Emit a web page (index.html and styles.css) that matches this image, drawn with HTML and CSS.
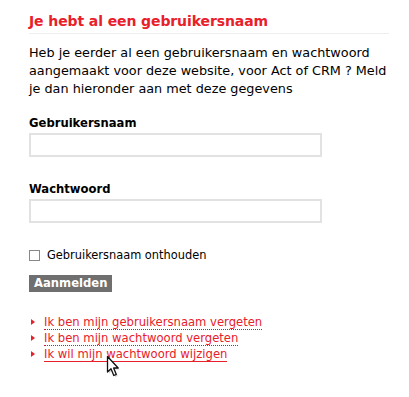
FILE: index.html
```html
<!DOCTYPE html>
<html lang="nl">
<head>
  <meta charset="UTF-8">
  <link rel="stylesheet" href="styles.css">
  <title>Inloggen</title>
</head>
<body>
  <div class="login">
    <h2 class="title">Je hebt al een gebruikersnaam</h2>
    <p class="intro">Heb je eerder al een gebruikersnaam en wachtwoord aangemaakt voor deze website, voor Act of CRM ? Meld je dan hieronder aan met deze gegevens</p>
    <form class="form">
      <div class="field">
        <label for="user">Gebruikersnaam</label>
        <input id="user" type="text">
      </div>
      <div class="field">
        <label for="pass">Wachtwoord</label>
        <input id="pass" type="password">
      </div>
      <label class="remember"><span class="check"></span>Gebruikersnaam onthouden</label>
      <button type="button" class="submit">Aanmelden</button>
    </form>
    <ul class="links">
      <li><a href="#">Ik ben mijn gebruikersnaam vergeten</a></li>
      <li><a href="#">Ik ben mijn wachtwoord vergeten</a></li>
      <li class="hover"><a href="#">Ik wil mijn wachtwoord wijzigen</a></li>
    </ul>
    <!-- muisaanwijzer boven de laatste link -->
    <svg class="cursor" width="16" height="23" viewBox="0 0 16 23">
      <path d="M3 2 L3 17.5 L6.5 14.3 L9.3 21 L11.8 19.9 L9.1 13.5 L13.7 13.5 Z" fill="#bbb" opacity="0.6"/>
      <path d="M1.5 0.5 L1.5 16 L5 12.8 L7.8 19.5 L10.3 18.4 L7.6 12 L12.2 12 Z" fill="#fff" stroke="#111" stroke-width="1.3" stroke-linejoin="round"/>
    </svg>
  </div>
</body>
</html>
```

FILE: styles.css
```css
* {
  box-sizing: border-box;
}
html, body {
  margin: 0;
  padding: 0;
  background: #fff;
}
body {
  font-family: "DejaVu Sans", Verdana, sans-serif;
  font-size: 12px;
  color: #000;
}
.login {
  position: relative;
  min-height: 397px;
  padding: 13px 0 0 29px;
  width: 409px;
}
.title {
  margin: 0 20px 0 0;
  padding-bottom: 3px;
  border-bottom: 1px solid #eeeeee;
  font-size: 14px;
  line-height: 17px;
  letter-spacing: -0.1px;
  color: #e8202a;
}
.intro {
  margin: 10px 0 0;
  width: 366px;
  font-size: 12.8px;
  line-height: 18px;
}
.form {
  margin-top: 17px;
}
.field {
  margin-bottom: 24px;
}
.field label {
  display: block;
  font-size: 11.6px;
  font-weight: bold;
  line-height: 16px;
  margin-bottom: 2px;
}
.field input {
  display: block;
  width: 293px;
  height: 24px;
  border: 2px solid #e2e2e2;
  margin: 0;
  padding: 2px 4px;
  background: #fff;
}
.field:nth-child(2) {
  margin-bottom: 25px;
}
.remember {
  display: flex;
  align-items: center;
  gap: 7px;
  font-size: 11.4px;
  line-height: 14px;
}
.check {
  width: 11px;
  height: 11px;
  border: 1px solid #888;
  background: #fff;
}
.submit {
  display: block;
  margin-top: 13px;
  height: 17px;
  padding: 0 5px;
  border: 0;
  background: #6f6f6f;
  color: #fff;
  font: bold 11.6px "DejaVu Sans", Verdana, sans-serif;
  line-height: 17px;
}
.links {
  list-style: none;
  margin: 22px 0 0;
  padding: 0;
}
.links li {
  position: relative;
  padding-left: 15px;
  font-size: 11.6px;
  line-height: 16px;
}
.links li::before {
  content: "";
  position: absolute;
  left: 2px;
  top: 5px;
  border-left: 4px solid #e8202a;
  border-top: 3px solid transparent;
  border-bottom: 3px solid transparent;
}
.links a {
  color: #e8202a;
  text-decoration: none;
  border-bottom: 1px dotted #c0202a;
}
.links .hover a {
  border-bottom: 1px solid #e8202a;
}
.cursor {
  position: absolute;
  left: 106px;
  top: 356px;
  display: block;
  z-index: 2;
}
```
